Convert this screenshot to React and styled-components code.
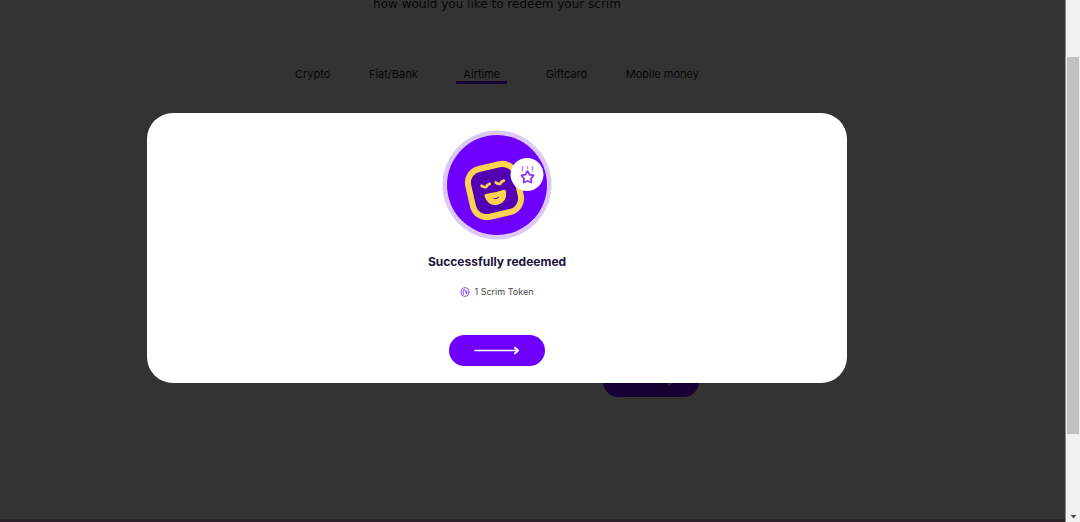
import React from "react";
import styled, { createGlobalStyle } from "styled-components";

const GlobalStyle = createGlobalStyle`
  *, *::before, *::after { box-sizing: border-box; }
  body {
    margin: 0;
    background: #fff;
    color: #1f1f1f;
    font-family: Inter, "DejaVu Sans", sans-serif;
  }
  button { font: inherit; color: inherit; border: 0; cursor: pointer; }
`;

const Window = styled.div`
  display: grid;
  grid-template-columns: minmax(0, 1fr) 15px;
  height: 100vh;
  overflow: hidden;
`;

const Viewport = styled.div`
  position: relative;
  display: flex;
  flex-direction: column;
  overflow: hidden;
`;

const Page = styled.main`
  flex: 1;
  display: flex;
  flex-direction: column;
  align-items: center;
  padding-right: 71px;
`;

const Lead = styled.p`
  margin: 0 0 60px;
  font-family: "DejaVu Sans", sans-serif;
  font-size: 12px;
  line-height: 8px;
`;

const Redeem = styled.section`
  display: flex;
  flex-direction: column;
  width: 404px;
  max-width: 100%;
`;

const Tabs = styled.nav`
  display: flex;
  justify-content: space-between;
  margin-bottom: 282px;
`;

const Tab = styled.button`
  padding: ${(p) => (p.$active ? "0 7px" : "0")};
  background: none;
  border-bottom: 3px solid ${(p) => (p.$active ? "#6c00ff" : "transparent")};
  font-size: 11px;
  line-height: 13px;
`;

const Pill = styled.button`
  display: flex;
  align-items: center;
  justify-content: center;
  align-self: ${(p) => p.$align || "center"};
  width: 96px;
  height: 31px;
  padding: 0;
  border-radius: 16px;
  background: #6f00ff;
`;

const Footer = styled.footer`
  height: 3px;
  background: #d8a8c0;
`;

const Overlay = styled.div`
  position: absolute;
  inset: 0;
  display: flex;
  justify-content: center;
  align-items: flex-start;
  padding: 113px 71px 0 0;
  background: rgba(0, 0, 0, 0.8);
`;

const Dialog = styled.div`
  display: flex;
  flex-direction: column;
  align-items: center;
  width: 700px;
  max-width: 100%;
  padding: 17px 24px;
  border-radius: 26px;
  background: #fff;
`;

const Avatar = styled.svg`
  display: block;
  width: 110px;
  height: 110px;
`;

const Title = styled.h2`
  margin: 12px 0 14px;
  color: #22133a;
  font-size: 12px;
  font-weight: 700;
  line-height: 20px;
`;

const Amount = styled.p`
  display: flex;
  align-items: center;
  gap: 4px;
  margin: 0 0 37px;
  color: #444;
  font-size: 9px;
  line-height: 12px;
`;

const Scrollbar = styled.div`
  display: flex;
  flex-direction: column;
  justify-content: space-between;
  align-items: center;
  padding-top: 57px;
  border-left: 1px solid #8c8c8c;
  background: #f1f1f1;
`;

const Thumb = styled.div`
  width: 12px;
  height: 81%;
  background: #c1c1c1;
`;

const Arrow = () => (
  <svg width="46" height="9" viewBox="0 0 46 9" fill="none" stroke="#fff" aria-hidden="true">
    <path d="M0.5 4.5H44" strokeWidth="1.7" />
    <path d="M41 1.7L44 4.5L41 7.3" strokeWidth="2" strokeLinecap="round" strokeLinejoin="round" />
  </svg>
);

const SuccessFace = () => (
  <Avatar viewBox="0 0 110 110" role="img" aria-label="Smiling face with a star">
    <circle cx="55" cy="55" r="54.5" fill="#dcc8f8" />
    <circle cx="55" cy="55" r="50" fill="#6f00ff" />
    <g transform="translate(52.5 60.5) rotate(-13)">
      <rect x="-24.5" y="-24.5" width="49" height="49" rx="14" fill="#5300b5" stroke="#ffd34f" strokeWidth="6" />
      <g fill="none" stroke="#ffd34f" strokeWidth="2.8" strokeLinecap="round" strokeLinejoin="round">
        <path d="M-11.500 -7.500Q-10 -5.300 -7.300 -5.300Q-6 -7.300 -3.200 -7.500" />
        <path d="M3 -7.500Q4.500 -5.300 7.200 -5.300Q8.500 -7.300 11.300 -7.500" />
      </g>
      <path d="M-9.500 1.500Q0 2.500 9.500 1.500Q11.200 1.700 11 4Q9.500 14.500 0 14.500Q-9.500 14.500 -11 4Q-11.200 1.700 -9.500 1.500Z" fill="#ffd34f" />
      <path d="M-2.200 7.500Q0 8.800 2.200 7.500" fill="none" stroke="#5300b5" strokeWidth="1" strokeLinecap="round" />
    </g>
    <circle cx="85" cy="44.5" r="16.5" fill="#fff" />
    <path
      d="M85.500 41L87.700 44.700L91.500 45.500L89 48.600L89.300 52.500L85.500 51L81.700 52.500L82 48.600L79.500 45.500L83.300 44.700Z"
      fill="none"
      stroke="#8a35f5"
      strokeWidth="1.8"
      strokeLinejoin="round"
    />
    <path d="M80.500 36V41.500M85.500 36V39M90.500 36V41.500" stroke="#b98af5" strokeWidth="1.4" />
  </Avatar>
);

const TokenIcon = () => (
  <svg width="10" height="10" viewBox="0 0 10 10" fill="none" stroke="#8430f0" strokeWidth="0.9" aria-hidden="true">
    <ellipse cx="5" cy="5" rx="3.9" ry="4.3" />
    <path d="M3.200 7.800V4.200Q3.200 2.300 4.600 2.500L6.800 7V3.500" />
  </svg>
);

const tabs = ["Crypto", "Fiat/Bank", "Airtime", "Giftcard", "Mobile money"];

export default function App() {
  return (
    <>
      <GlobalStyle />
      <Window>
        <Viewport>
          <Page>
            <Lead>how would you like to redeem your scrim</Lead>
            <Redeem>
              <Tabs>
                {tabs.map((name) => (
                  <Tab key={name} type="button" $active={name === "Airtime"}>
                    {name}
                  </Tab>
                ))}
              </Tabs>
              <Pill type="button" $align="flex-end" aria-label="Redeem">
                <Arrow />
              </Pill>
            </Redeem>
          </Page>
          <Footer />
          <Overlay>
            <Dialog role="dialog" aria-modal="true" aria-labelledby="dialog-title">
              <SuccessFace />
              <Title id="dialog-title">Successfully redeemed</Title>
              <Amount>
                <TokenIcon />1 Scrim Token
              </Amount>
              <Pill type="button" aria-label="Continue">
                <Arrow />
              </Pill>
            </Dialog>
          </Overlay>
        </Viewport>
        <Scrollbar aria-hidden="true">
          <Thumb />
          <svg width="7" height="8" viewBox="0 0 7 8">
            <path d="M0.5 1H6.500L3.500 4.500Z" fill="#505050" />
          </svg>
        </Scrollbar>
      </Window>
    </>
  );
}
